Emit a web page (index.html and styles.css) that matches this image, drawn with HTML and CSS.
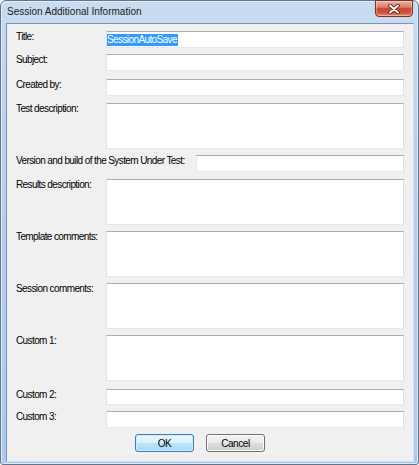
FILE: index.html
```html
<!DOCTYPE html>
<html lang="en">
<head>
    <meta charset="UTF-8">
    <title>Session Additional Information</title>
    <link rel="stylesheet" href="styles.css">
</head>
<body>
    <div class="window">
        <div class="titlebar">
            <span class="title">Session Additional Information</span>
            <button class="close" title="Close">
                <svg width="12" height="10" viewBox="0 0 12 10">
                    <path d="M2 1.5 L10 8.5 M10 1.5 L2 8.5" stroke="#4a1d16" stroke-width="3.6" stroke-linecap="round"/>
                    <path d="M2 1.5 L10 8.5 M10 1.5 L2 8.5" stroke="#fff" stroke-width="1.9" stroke-linecap="round"/>
                </svg>
            </button>
        </div>

        <div class="client">
            <div class="row">
                <label>Title:</label>
                <div class="box"><span class="selected">SessionAutoSave</span></div>
            </div>
            <div class="row">
                <label>Subject:</label>
                <div class="box"></div>
            </div>
            <div class="row push2">
                <label>Created by:</label>
                <div class="box"></div>
            </div>
            <div class="row push1">
                <label>Test description:</label>
                <div class="box multi"></div>
            </div>
            <div class="row wide">
                <label>Version and build of the System Under Test:</label>
                <div class="box"></div>
            </div>
            <div class="row push1">
                <label>Results description:</label>
                <div class="box multi"></div>
            </div>
            <div class="row">
                <label>Template comments:</label>
                <div class="box multi"></div>
            </div>
            <div class="row">
                <label>Session comments:</label>
                <div class="box multi"></div>
            </div>
            <div class="row">
                <label>Custom 1:</label>
                <div class="box multi"></div>
            </div>
            <div class="row push2">
                <label>Custom 2:</label>
                <div class="box short"></div>
            </div>
            <div class="row">
                <label>Custom 3:</label>
                <div class="box"></div>
            </div>

            <div class="buttons">
                <button class="btn default">OK</button>
                <button class="btn">Cancel</button>
            </div>
        </div>
    </div>
</body>
</html>
```

FILE: styles.css
```css
body {
    margin: 0;
    font-family: "Liberation Sans", Arial, sans-serif;
    font-size: 10px;
    color: #000;
}

/* window frame (aero glass) */
.window {
    width: 419px;
    height: 465px;
    box-sizing: border-box;
    border: 1px solid #63758b;
    border-radius: 6px 6px 3px 3px;
    padding: 0 4px 2px 5px;
    background: linear-gradient(to bottom, #c9dcf1, #b7d0ec 30%, #abc9ec);
    box-shadow: inset 1px 1px 0 #e4eefa, inset -1px -1px 0 #d9e7f7;
    display: flex;
    flex-direction: column;
}
.titlebar {
    height: 22px;
    display: flex;
    justify-content: space-between;
    align-items: flex-start;
}
.title {
    padding: 5px 0 0 1px;
    line-height: 12px;
    color: #1b1b1b;
}
.close {
    width: 38px;
    height: 17px;
    margin: -1px 1px 0 0;
    padding: 0;
    box-sizing: border-box;
    border: 1px solid #7a3126;
    border-radius: 0 0 4px 4px;
    background: linear-gradient(to bottom, #eab1a4, #dc806c 40%, #c8462f 52%, #cf553c 78%, #e48d70);
    box-shadow: inset 0 0 0 1px rgba(255, 255, 255, 0.35);
    display: flex;
    align-items: center;
    justify-content: center;
}

/* dialog body */
.client {
    flex: 1;
    border: 1px solid;
    border-color: #7893b7 #d2e2f4 #d2e2f4 #7893b7;
    background: #f0f0f0;
    padding: 7px 9px 0 9px;
    display: flex;
    flex-direction: column;
    gap: 6px;
}
.row {
    display: flex;
    align-items: flex-start;
}
.row label {
    width: 90px;
    flex: none;
    line-height: 12px;
    letter-spacing: -0.6px;
}
.row.wide label {
    width: 180px;
}
.push1 { margin-top: 1px; }
.push2 { margin-top: 2px; }

.box {
    flex: 1;
    height: 17px;
    box-sizing: border-box;
    border: 1px solid;
    border-color: #abadb3 #dbdfe6 #e3e9ef #e2e3ea;
    background: #fff;
    padding: 2px 0 0 0;
    line-height: 12px;
    letter-spacing: -0.6px;
}
.box.multi { height: 46px; }
.box.short { height: 16px; }
.selected {
    display: inline-block;
    background: #3399ff;
    color: #fff;
    padding-right: 1px;
}

.buttons {
    display: flex;
    gap: 12px;
    padding-left: 119px;
}
.btn {
    width: 59px;
    height: 18px;
    padding: 0;
    box-sizing: border-box;
    font: inherit;
    letter-spacing: -0.4px;
    color: #000;
    border: 1px solid #707070;
    border-radius: 3px;
    background: linear-gradient(to bottom, #f2f2f2, #ebebeb 50%, #dddddd 50%, #cfcfcf);
    box-shadow: inset 0 0 0 1px #fcfcfc;
}
.btn.default {
    border-color: #3c7fb1;
    background: linear-gradient(to bottom, #eaf6fd, #d9f0fc 50%, #bee6fd 50%, #a7d9f5);
    box-shadow: inset 0 0 0 1px #cdebfb;
}
```
